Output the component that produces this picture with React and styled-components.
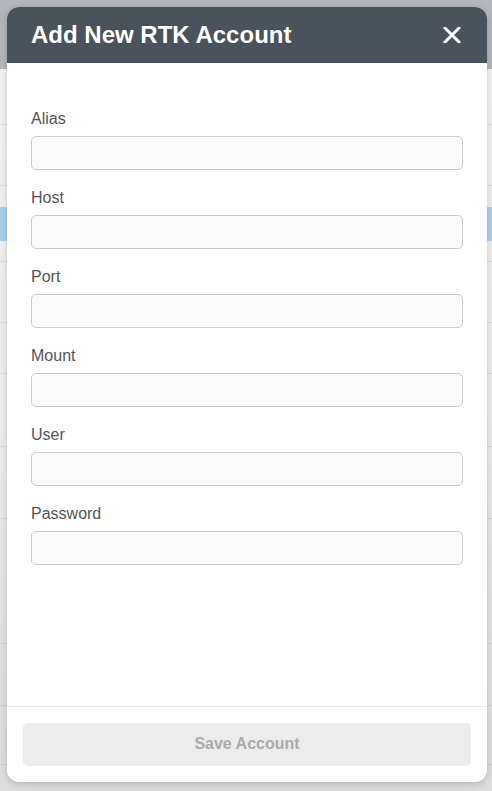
import styled, { createGlobalStyle } from 'styled-components';

const GlobalStyle = createGlobalStyle`
  html, body {
    margin: 0;
    padding: 0;
    height: 100%;
    overflow: hidden;
  }
  body {
    font-family: "Liberation Sans", Arial, sans-serif;
    background: #f2f2f2;
  }
`;

const Page = styled.div`
  position: relative;
  height: 791px;
  overflow: hidden;
  background: linear-gradient(to bottom, #f6f6f6 0%, #eeeeee 50%, #dddddd 100%);
`;

const PageHeader = styled.div`
  height: 69px;
  background: #b4b8bc;
`;

const Row = styled.div`
  height: ${(p) => p.$h}px;
  border-bottom: 1px solid rgba(0, 0, 0, 0.07);
  box-sizing: border-box;
  display: flex;
  align-items: center;
`;

const Selected = styled.div`
  width: 100%;
  height: 34px;
  background: #a9d3ea;
`;

const Modal = styled.div`
  position: absolute;
  top: 7px;
  left: 7px;
  width: 480px;
  height: 775px;
  background: #fff;
  border-radius: 12px;
  overflow: hidden;
  display: flex;
  flex-direction: column;
  box-shadow: 0 2px 8px rgba(0, 0, 0, 0.18);
`;

const Header = styled.div`
  height: 56px;
  flex: none;
  background: #4a525c;
  display: flex;
  align-items: center;
  justify-content: space-between;
  padding: 0 24px;
`;

const Title = styled.h2`
  margin: 0;
  color: #fff;
  font-size: 24px;
  font-weight: bold;
`;

const CloseButton = styled.button`
  border: none;
  background: none;
  padding: 0;
  width: 22px;
  height: 22px;
  display: flex;
  align-items: center;
  justify-content: center;
  cursor: pointer;
`;

const Body = styled.div`
  flex: 1;
  padding: 47px 24px 0;
  display: flex;
  flex-direction: column;
  gap: 19px;
`;

const Field = styled.div`
  display: flex;
  flex-direction: column;
  gap: 8px;
`;

const Label = styled.label`
  font-size: 16px;
  line-height: 18px;
  color: #555;
`;

const Input = styled.input`
  box-sizing: border-box;
  height: 34px;
  width: 100%;
  border: 1px solid #cccccc;
  border-radius: 5px;
  background: #fafafa;
  font-family: inherit;
  font-size: 16px;
  padding: 0 10px;
  outline: none;
`;

const Footer = styled.div`
  flex: none;
  border-top: 1px solid #e8e8e8;
  padding: 16px;
`;

const SaveButton = styled.button`
  width: 100%;
  height: 43px;
  border: none;
  border-radius: 5px;
  background: #ececec;
  color: #aaaaaa;
  font-family: inherit;
  font-size: 16px;
  font-weight: bold;
  padding: 0 0 2px;
`;

const rows = [56, 61, 76, 61, 51, 73, 72, 125, 62, 59, 40];
const fields = ['Alias', 'Host', 'Port', 'Mount', 'User', 'Password'];

const App = () => (
  <>
    <GlobalStyle />
    <Page>
      <PageHeader />
      {rows.map((h, i) => (
        <Row key={i} $h={h}>
          {i === 2 && <Selected />}
        </Row>
      ))}
      <Modal>
        <Header>
          <Title>Add New RTK Account</Title>
          <CloseButton aria-label="Close">
            <svg width="18" height="16" viewBox="0 0 18 16">
              <path d="M2 1 L16 15 M16 1 L2 15" stroke="#fff" strokeWidth="3" strokeLinecap="square" />
            </svg>
          </CloseButton>
        </Header>
        <Body>
          {fields.map((f) => (
            <Field key={f}>
              <Label>{f}</Label>
              <Input type={f === 'Password' ? 'password' : 'text'} />
            </Field>
          ))}
        </Body>
        <Footer>
          <SaveButton disabled>Save Account</SaveButton>
        </Footer>
      </Modal>
    </Page>
  </>
);

export default App;
